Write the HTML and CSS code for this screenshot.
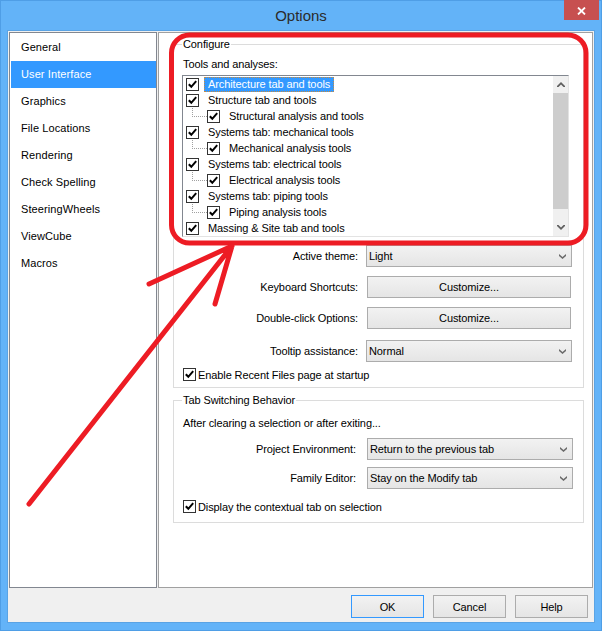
FILE: index.html
```html
<!DOCTYPE html>
<html lang="en">
<head>
  <meta charset="UTF-8">
  <meta name="viewport" content="width=device-width, initial-scale=1.0">
  <title>Options</title>
  <link rel="stylesheet" href="styles.css">
</head>
<body>
  <div class="window">
    <div class="titlebar">
      <span class="title">Options</span>
      <button class="close-btn" aria-label="Close">
        <svg width="9" height="8" viewBox="0 0 9 8"><path d="M1 0.5 L8 7.5 M8 0.5 L1 7.5" stroke="#fff" stroke-width="1.8" fill="none"/></svg>
      </button>
    </div>

    <div class="client">
      <div class="main">
        <ul class="page-list">
          <li>General</li>
          <li class="selected">User Interface</li>
          <li>Graphics</li>
          <li>File Locations</li>
          <li>Rendering</li>
          <li>Check Spelling</li>
          <li>SteeringWheels</li>
          <li>ViewCube</li>
          <li>Macros</li>
        </ul>

        <div class="panel">
          <fieldset class="group configure">
            <legend>Configure</legend>
            <div class="caption">Tools and analyses:</div>

            <div class="tree">
              <div class="tree-items">
                <div class="tree-row">
                  <span class="chk"><svg width="11" height="11" viewBox="0 0 11 11"><path d="M1.8 5.2 L4.3 7.8 L9.2 2.2" stroke="#000" stroke-width="2" fill="none"/></svg></span>
                  <span class="tree-label selected">Architecture tab and tools</span>
                </div>
                <div class="tree-row">
                  <span class="chk"><svg width="11" height="11" viewBox="0 0 11 11"><path d="M1.8 5.2 L4.3 7.8 L9.2 2.2" stroke="#000" stroke-width="2" fill="none"/></svg></span>
                  <span class="tree-label">Structure tab and tools</span>
                </div>
                <div class="tree-row">
                  <span class="branch"></span>
                  <span class="chk"><svg width="11" height="11" viewBox="0 0 11 11"><path d="M1.8 5.2 L4.3 7.8 L9.2 2.2" stroke="#000" stroke-width="2" fill="none"/></svg></span>
                  <span class="tree-label">Structural analysis and tools</span>
                </div>
                <div class="tree-row">
                  <span class="chk"><svg width="11" height="11" viewBox="0 0 11 11"><path d="M1.8 5.2 L4.3 7.8 L9.2 2.2" stroke="#000" stroke-width="2" fill="none"/></svg></span>
                  <span class="tree-label">Systems tab: mechanical tools</span>
                </div>
                <div class="tree-row">
                  <span class="branch"></span>
                  <span class="chk"><svg width="11" height="11" viewBox="0 0 11 11"><path d="M1.8 5.2 L4.3 7.8 L9.2 2.2" stroke="#000" stroke-width="2" fill="none"/></svg></span>
                  <span class="tree-label">Mechanical analysis tools</span>
                </div>
                <div class="tree-row">
                  <span class="chk"><svg width="11" height="11" viewBox="0 0 11 11"><path d="M1.8 5.2 L4.3 7.8 L9.2 2.2" stroke="#000" stroke-width="2" fill="none"/></svg></span>
                  <span class="tree-label">Systems tab: electrical tools</span>
                </div>
                <div class="tree-row">
                  <span class="branch"></span>
                  <span class="chk"><svg width="11" height="11" viewBox="0 0 11 11"><path d="M1.8 5.2 L4.3 7.8 L9.2 2.2" stroke="#000" stroke-width="2" fill="none"/></svg></span>
                  <span class="tree-label">Electrical analysis tools</span>
                </div>
                <div class="tree-row">
                  <span class="chk"><svg width="11" height="11" viewBox="0 0 11 11"><path d="M1.8 5.2 L4.3 7.8 L9.2 2.2" stroke="#000" stroke-width="2" fill="none"/></svg></span>
                  <span class="tree-label">Systems tab: piping tools</span>
                </div>
                <div class="tree-row">
                  <span class="branch"></span>
                  <span class="chk"><svg width="11" height="11" viewBox="0 0 11 11"><path d="M1.8 5.2 L4.3 7.8 L9.2 2.2" stroke="#000" stroke-width="2" fill="none"/></svg></span>
                  <span class="tree-label">Piping analysis tools</span>
                </div>
                <div class="tree-row">
                  <span class="chk"><svg width="11" height="11" viewBox="0 0 11 11"><path d="M1.8 5.2 L4.3 7.8 L9.2 2.2" stroke="#000" stroke-width="2" fill="none"/></svg></span>
                  <span class="tree-label">Massing &amp; Site tab and tools</span>
                </div>
              </div>
              <div class="scrollbar">
                <div class="sb-arrow"><svg width="8" height="5" viewBox="0 0 8 5"><path d="M0 4 L4 0 L8 4 L8 5 L6.5 5 L4 2.5 L1.5 5 L0 5 Z" fill="#606060"/></svg></div>
                <div class="sb-thumb"></div>
                <div class="sb-track"></div>
                <div class="sb-arrow"><svg width="8" height="5" viewBox="0 0 8 5"><path d="M0 1 L4 5 L8 1 L8 0 L6.5 0 L4 2.5 L1.5 0 L0 0 Z" fill="#606060"/></svg></div>
              </div>
            </div>

            <div class="field first">
              <label>Active theme:</label>
              <div class="combo"><span>Light</span><svg width="7" height="5" viewBox="0 0 7 5"><path d="M0 0 L3.5 3 L7 0 L7 2 L3.5 5 L0 2 Z" fill="#6a6a6a"/></svg></div>
            </div>
            <div class="field">
              <label>Keyboard Shortcuts:</label>
              <button class="btn">Customize...</button>
            </div>
            <div class="field">
              <label>Double-click Options:</label>
              <button class="btn">Customize...</button>
            </div>
            <div class="field loose">
              <label>Tooltip assistance:</label>
              <div class="combo"><span>Normal</span><svg width="7" height="5" viewBox="0 0 7 5"><path d="M0 0 L3.5 3 L7 0 L7 2 L3.5 5 L0 2 Z" fill="#6a6a6a"/></svg></div>
            </div>
            <div class="check-row">
              <span class="chk"><svg width="11" height="11" viewBox="0 0 11 11"><path d="M1.8 5.2 L4.3 7.8 L9.2 2.2" stroke="#000" stroke-width="2" fill="none"/></svg></span>
              <span>Enable Recent Files page at startup</span>
            </div>
          </fieldset>

          <fieldset class="group tabs">
            <legend>Tab Switching Behavior</legend>
            <div class="caption">After clearing a selection or after exiting...</div>
            <div class="field first">
              <label>Project Environment:</label>
              <div class="combo"><span>Return to the previous tab</span><svg width="7" height="5" viewBox="0 0 7 5"><path d="M0 0 L3.5 3 L7 0 L7 2 L3.5 5 L0 2 Z" fill="#6a6a6a"/></svg></div>
            </div>
            <div class="field tight">
              <label>Family Editor:</label>
              <div class="combo"><span>Stay on the Modify tab</span><svg width="7" height="5" viewBox="0 0 7 5"><path d="M0 0 L3.5 3 L7 0 L7 2 L3.5 5 L0 2 Z" fill="#6a6a6a"/></svg></div>
            </div>
            <div class="check-row">
              <span class="chk"><svg width="11" height="11" viewBox="0 0 11 11"><path d="M1.8 5.2 L4.3 7.8 L9.2 2.2" stroke="#000" stroke-width="2" fill="none"/></svg></span>
              <span>Display the contextual tab on selection</span>
            </div>
          </fieldset>
        </div>
      </div>

      <div class="footer">
        <button class="dlg-btn default">OK</button>
        <button class="dlg-btn">Cancel</button>
        <button class="dlg-btn">Help</button>
      </div>
    </div>

    <!-- red markup drawn over the screenshot -->
    <svg class="annotation" width="602" height="631" viewBox="0 0 602 631">
      <rect x="171.5" y="35" width="414.5" height="208" rx="18" fill="none" stroke="#ed1c24" stroke-width="5"/>
      <path d="M29 504 L232 246 M232 246 L149 284 M232 246 L215 304" fill="none" stroke="#ed1c24" stroke-width="5" stroke-linecap="round" stroke-linejoin="round"/>
    </svg>
  </div>
</body>
</html>
```

FILE: styles.css
```css
* {
  box-sizing: border-box;
}

body {
  margin: 0;
  font-family: "Liberation Sans", Arial, sans-serif;
  font-size: 11px;
  letter-spacing: -0.1px;
  color: #000;
  background-color: #63b3f8;
}

.window {
  position: relative;
  width: 602px;
  height: 631px;
  background-color: #63b3f8;
  box-shadow: inset 0 0 0 1px #4f9ee6;
  display: flex;
  flex-direction: column;
}

.titlebar {
  height: 31px;
  display: grid;
  grid-template-columns: 1fr auto 1fr;
}

.title {
  grid-column: 2;
  align-self: center;
  font-size: 15px;
  letter-spacing: 0;
  color: #2b2b2b;
}

.close-btn {
  grid-column: 3;
  justify-self: end;
  width: 35px;
  height: 20px;
  margin-right: 3px;
  padding: 2px 0 0 0;
  border: none;
  background-color: #c75050;
  display: flex;
  align-items: center;
  justify-content: center;
}

.client {
  margin: 0 8px;
  height: 591px;
  background-color: #f0f0f0;
  box-shadow: 0 0 0 1px #5aa3e4;
  display: flex;
  flex-direction: column;
}

.main {
  display: flex;
  gap: 1px;
  height: 557px;
  padding: 1px 1px 0 1px;
}

.page-list {
  width: 148px;
  margin: 0;
  padding: 1px 0 0 1px;
  list-style: none;
  background-color: #fff;
  border: 1px solid #828790;
}

.page-list li {
  height: 27px;
  line-height: 27px;
  padding-left: 10px;
  letter-spacing: 0.1px;
}

.page-list li.selected {
  background-color: #3399ff;
  color: #fff;
}

.panel {
  flex: 1;
  background-color: #fff;
  border: 1px solid #a0a0a0;
}

.group {
  min-width: 0;
  margin: 4px 8px 0 14px;
  padding: 6px 0 5px 8px;
  border: 1px solid #dcdcdc;
}

.group legend {
  padding: 0 1px;
  line-height: 14px;
}

.group.tabs {
  margin-top: 5px;
  padding: 9px 0 8px 8px;
}

.caption {
  line-height: 14px;
  padding-left: 1px;
}

/* tree of tools */
.tree {
  display: flex;
  width: 387px;
  height: 162px;
  margin-top: 4px;
  border: 1px solid;
  border-color: #828790 #e3e3e3 #e3e3e3 #828790;
}

.tree-items {
  flex: 1;
  padding-left: 3px;
}

.tree-row {
  height: 16px;
  display: flex;
  align-items: center;
  white-space: nowrap;
}

.tree-label {
  margin-left: 5px;
  padding: 0 3px;
  line-height: 13px;
  border: 1px solid transparent;
}

.tree-label.selected {
  background-color: #3399ff;
  color: #fff;
  border: 1px dotted #c88a3e;
}

.branch {
  align-self: flex-start;
  width: 15px;
  height: 9px;
  margin-left: 6px;
  border-left: 1px dotted #a0a0a0;
  border-bottom: 1px dotted #a0a0a0;
}

.chk {
  width: 13px;
  height: 13px;
  flex-shrink: 0;
  display: flex;
  align-items: center;
  justify-content: center;
  background-color: #fff;
  border: 1px solid #333;
}

.scrollbar {
  width: 15px;
  display: flex;
  flex-direction: column;
  background-color: #f0f0f0;
}

.sb-arrow {
  height: 17px;
  display: flex;
  align-items: center;
  justify-content: center;
}

.sb-thumb {
  height: 116px;
  background-color: #cdcdcd;
}

.sb-track {
  flex: 1;
}

/* label + control rows */
.field {
  display: flex;
  align-items: center;
  gap: 8px;
  height: 22px;
  margin-top: 9px;
  padding-right: 11px;
}

.field.first {
  margin-top: 8px;
}

.field.loose {
  margin-top: 11px;
}

.field.tight {
  margin-top: 7px;
}

.group.tabs .field {
  gap: 11px;
  padding-right: 10px;
}

.field label {
  flex: 1;
  text-align: right;
}

.combo {
  width: 206px;
  height: 22px;
  display: flex;
  align-items: center;
  justify-content: space-between;
  padding: 0 5px 0 2px;
  border: 1px solid #acacac;
  background: linear-gradient(#f2f2f2, #e5e5e5);
}

.btn,
.dlg-btn {
  font-family: inherit;
  font-size: 11px;
  letter-spacing: -0.1px;
  color: #000;
  padding: 0;
  border: 1px solid #acacac;
  background: linear-gradient(#f2f2f2, #e5e5e5);
}

.btn {
  width: 204px;
  height: 22px;
  margin: 0 1px;
}

.check-row {
  display: flex;
  align-items: center;
  height: 15px;
  margin-top: 5px;
  padding-left: 1px;
}

.check-row .chk {
  margin-right: 2px;
}

.group.tabs .check-row {
  margin-top: 10px;
}

.footer {
  height: 34px;
  display: flex;
  justify-content: flex-end;
  align-items: flex-start;
  gap: 9px;
  padding: 7px 6px 0 0;
}

.dlg-btn {
  width: 73px;
  height: 23px;
}

.dlg-btn.default {
  border-color: #3399ff;
}

.annotation {
  position: absolute;
  top: 0;
  left: 0;
  pointer-events: none;
}
```
